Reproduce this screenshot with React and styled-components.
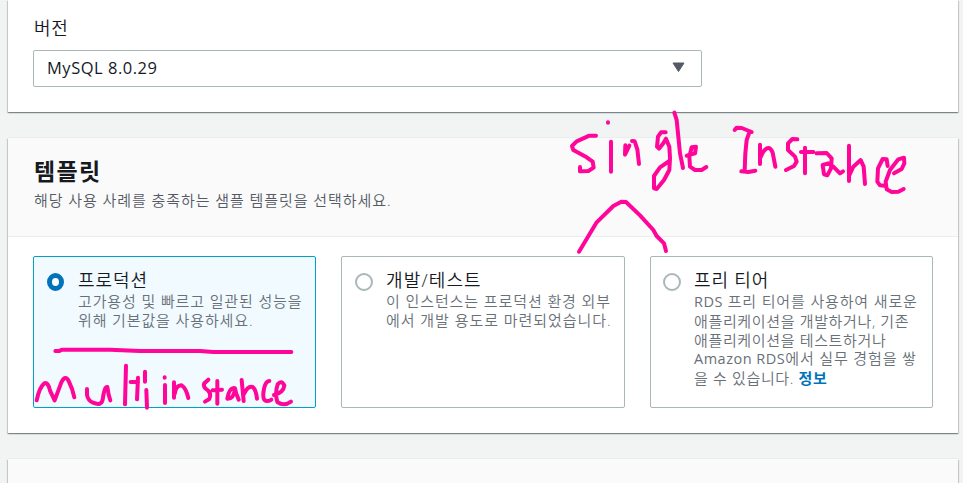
import React from 'react';
import styled, { createGlobalStyle, css } from 'styled-components';

const Global = createGlobalStyle`
  * { box-sizing: border-box; }
  body {
    margin: 0;
    background: #f2f3f3;
    overflow: hidden;
    font-family: 'Open Sans', 'Noto Sans CJK KR', sans-serif;
    color: #16191f;
  }
`;

const Page = styled.main`
  position: relative;
  width: 963px;
  height: 483px;
  overflow: hidden;
  padding: 0 5px 0 8px;
  display: flex;
  flex-direction: column;
  gap: 26px;
`;

const Panel = styled.section`
  flex: none;
  height: ${(p) => p.$height}px;
  background: #fff;
  box-shadow: 0 1px 1px 0 rgba(0, 28, 36, 0.3), 1px 1px 1px 0 rgba(0, 28, 36, 0.15),
    -1px 1px 1px 0 rgba(0, 28, 36, 0.15), 0 -1px 0 0 #eaeded;
`;

const VersionBody = styled.div`
  padding: 15px 25px 0;
`;

const Label = styled.label`
  display: block;
  height: 35px;
  padding-left: 1px;
  font-size: 18px;
  line-height: 26px;
  font-weight: 350;
`;

const Select = styled.button`
  display: flex;
  align-items: center;
  justify-content: space-between;
  width: 669px;
  height: 37px;
  padding: 0 16px 2px 13px;
  border: 1px solid #aab7b8;
  border-radius: 2px;
  background: #fff;
  font: 400 16.5px/32px 'Open Sans', sans-serif;
  color: #16191f;
`;

const PanelHeader = styled.header`
  height: 99px;
  padding: 16px 25px 0 26px;
  background: #fafafa;
  border-bottom: 1px solid #eaeded;
`;

const Title = styled.h2`
  margin: 0;
  font-size: 23px;
  line-height: 34px;
  font-weight: 700;
`;

const Line = styled.span`
  display: block;
  width: max-content;
  white-space: nowrap;
  letter-spacing: ${(p) => p.$spacing || 0}px;
`;

const Subtitle = styled.p`
  margin: 0;
  font-size: 15px;
  line-height: 25px;
  font-weight: 350;
  color: #545b64;
`;

const Tiles = styled.div`
  display: grid;
  grid-template-columns: 283px 284px 283px;
  column-gap: 25px;
  padding: 19px 25px 0;
`;

const Tile = styled.article`
  display: flex;
  gap: 13px;
  height: 152px;
  padding: 10px 10px 0 13px;
  border: 1px solid #aab7b8;
  border-radius: 2px;
  background: #fff;
  ${(p) => p.$selected && css`
    gap: 14px;
    border-color: #00a1c9;
    background: #f1faff;
  `}
  &:last-child {
    padding-left: 12px;
  }
`;

const Radio = styled.span`
  flex: none;
  width: ${(p) => (p.$selected ? 17 : 18)}px;
  height: 18px;
  margin-top: 6px;
  border-radius: 50%;
  background: #fff;
  border: ${(p) => (p.$selected ? '5px solid #0073bb' : '2px solid #aab7b8')};
`;

const TileText = styled.div`
  min-width: 0;
`;

const TileTitle = styled.h3`
  margin: 0;
  font-size: 18px;
  line-height: 26px;
  height: 25px;
  font-weight: 350;
`;

const Description = styled.p`
  margin: 0;
  font-size: 15px;
  line-height: 18.8px;
  font-weight: 350;
  color: #687078;
`;

const Latin = styled.span`
  font-size: 14.5px;
  font-weight: 400;
  letter-spacing: 0.5px;
`;

const InfoLink = styled.a`
  font-weight: 700;
  color: #0073bb;
`;

const Ink = styled.svg`
  position: absolute;
  inset: 0;
  pointer-events: none;
  fill: none;
  stroke: #ff0599;
  stroke-width: 12;
  stroke-linecap: round;
  stroke-linejoin: round;
`;

const tiles = [
  {
    title: '프로덕션',
    titleSpacing: 0.9,
    selected: true,
    lines: [
      { text: '고가용성 및 빠르고 일관된 성능을', spacing: 0.87 },
      { text: '위해 기본값을 사용하세요.', spacing: 0.87 },
    ],
  },
  {
    title: '개발/테스트',
    titleSpacing: 1.15,
    lines: [
      { text: '이 인스턴스는 프로덕션 환경 외부', spacing: 0.9 },
      { text: '에서 개발 용도로 마련되었습니다.', spacing: 0.95 },
    ],
  },
  {
    title: '프리 티어',
    titleSpacing: 0.85,
    lines: [
      { latin: 'RDS', text: ' 프리 티어를 사용하여 새로운', spacing: 0.85 },
      { text: '애플리케이션을 개발하거나, 기존', spacing: 0.65 },
      { text: '애플리케이션을 테스트하거나', spacing: 0.65 },
      { latin: 'Amazon RDS', text: '에서 실무 경험을 쌓', spacing: 0.85 },
      { text: '을 수 있습니다. ', spacing: 0.65, link: '정보' },
    ],
  },
];

const Handwriting = () => (
  <Ink width="963" height="483" viewBox="0 0 963 483">
    <g transform="translate(560 100) scale(.33333)">
      <path d="M108 107L88 107L50 124L36 138L40 150L80 172L98 185L101 203L85 213L60 214L60 201" />
      <path d="M144 67V68M153 125V215" />
      <path d="M196 136L195 164L208 137M216 123L224 124L232 148L237 192" />
      <path d="M317 97L303 97L294 110L291 140L297 146L310 130L318 116L328 140L330 175L328 210L312 240L290 267L282 265L282 228L300 202L328 183" />
      <path d="M343 38L350 60L360 160L369 204" />
      <path d="M380 167L405 160L408 140L395 142L388 170L390 200L405 210L425 210L439 201" />
      <path d="M57 455L110 367L160 318L184 305L198 306L240 346L280 390L290 408L312 430L318 453" />
    </g>
    <g transform="translate(720 110) scale(.33333)">
      <path d="M44 60L50 53L65 54L95 66M88 67L80 90L76 130L74 182M64 184L85 186L106 182" />
      <path d="M120 104V162M120 145L130 125Q148 102 158 128L166 170" />
      <path d="M232 88L217 87L204 100L204 120L225 140L230 155L222 168L198 180" />
      <path d="M255 113V190M243 126H280" />
      <path d="M290 130L320 129L335 145L333 175L322 196L312 193L308 165L325 160L340 170L360 190L369 184" />
      <path d="M387 107V213M387 198L400 170L422 150L431 170L435 222" />
      <path d="M503 168L500 148L488 147L474 175L472 215L480 226L494 227" />
      <path d="M522 190L545 177L553 160L552 143L535 148L510 180L497 215L500 238L515 246L535 245L551 237" />
    </g>
    <g transform="translate(20 245) scale(.33333)">
      <path d="M106 318L118 318L125 314L270 314L360 318L540 318L580 321L814 321" />
      <path d="M50 466Q58 428 73 415Q84 410 90 437L104 466L124 412Q136 388 146 408Q158 432 163 457" />
      <path d="M201 432L201 450Q204 467 219 473Q244 484 248 464Q253 424 262 426Q265 450 271 466" />
      <path d="M318 362L315 478M354 398L351 463M332 411L354 411M375 380V410M379 435L381 488" />
      <path d="M434 397V398M435 420V474M462 412V458M464 447Q468 420 485 421Q498 429 505 459" />
      <path d="M565 404L553 415Q549 422 556 430Q577 443 568 462L555 470M592 408V476M578 436L606 434" />
      <path d="M641 429Q627 430 622 461Q642 462 645 430Q647 445 656 464M665 405L671 468M672 447Q684 421 698 426Q708 434 711 461" />
      <path d="M748 408Q734 408 730 445Q728 478 754 464M762 450Q790 443 793 422Q785 404 773 418Q764 444 772 471Q792 485 813 470" />
    </g>
  </Ink>
);

export default function App() {
  return (
    <Page>
      <Global />
      <Panel $height={112}>
        <VersionBody>
          <Label><Line $spacing={0.6}>버전</Line></Label>
          <Select>
            <Line $spacing={0.52}>MySQL 8.0.29</Line>
            <svg width="13" height="11" viewBox="0 0 13 11"><path d="M1 1H12L6.5 9.5Z" fill="#545b64" stroke="#545b64" strokeLinejoin="round" /></svg>
          </Select>
        </VersionBody>
      </Panel>
      <Panel $height={295}>
        <PanelHeader>
          <Title><Line $spacing={1.3}>템플릿</Line></Title>
          <Subtitle><Line $spacing={0.93}>해당 사용 사례를 충족하는 샘플 템플릿을 선택하세요.</Line></Subtitle>
        </PanelHeader>
        <Tiles>
          {tiles.map((tile) => (
            <Tile key={tile.title} $selected={tile.selected}>
              <Radio $selected={tile.selected} />
              <TileText>
                <TileTitle><Line $spacing={tile.titleSpacing}>{tile.title}</Line></TileTitle>
                <Description>
                  {tile.lines.map(({ latin, text, spacing, link }) => (
                    <Line key={text} $spacing={spacing}>
                      {latin && <Latin>{latin}</Latin>}
                      {text}
                      {link && <InfoLink>{link}</InfoLink>}
                    </Line>
                  ))}
                </Description>
              </TileText>
            </Tile>
          ))}
        </Tiles>
      </Panel>
      <Panel $height={60}><PanelHeader /></Panel>
      <Handwriting />
    </Page>
  );
}
